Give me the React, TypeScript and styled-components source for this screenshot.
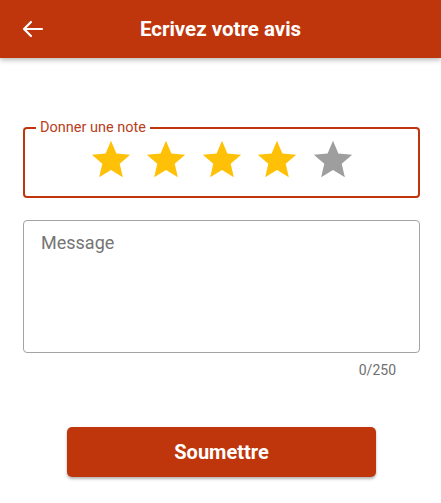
import React from "react";
import styled, { createGlobalStyle } from "styled-components";

const Global = createGlobalStyle`
  html, body { margin: 0; padding: 0; background: #ffffff; }
  body { font-family: Roboto, "Noto Sans", Arial, sans-serif; }
  * { box-sizing: border-box; }
`;

const PRIMARY = "#bf360c";

const Page = styled.div`
  width: 441px;
  min-height: 503px;
  background: #ffffff;
  display: flex;
  flex-direction: column;
`;

const Header = styled.header`
  height: 58px;
  background: ${PRIMARY};
  display: grid;
  grid-template-columns: 60px 1fr 60px;
  align-items: center;
  box-shadow: 0 2px 5px rgba(0, 0, 0, 0.28);
  position: relative;
  z-index: 1;
`;

const BackButton = styled.button`
  border: 0;
  background: transparent;
  padding: 0 0 0 22px;
  height: 58px;
  display: flex;
  align-items: center;
  cursor: pointer;
`;

const Title = styled.h1`
  margin: 0;
  text-align: center;
  color: #ffffff;
  font-size: 20.5px;
  font-weight: 700;
  line-height: 24px;
`;

const Main = styled.main`
  padding: 62px 21px 0 23px;
  display: flex;
  flex-direction: column;
`;

const RatingBox = styled.fieldset`
  margin: 0;
  padding: 1px 0 13px;
  border: 2px solid ${PRIMARY};
  border-radius: 4px;
  min-width: 0;
`;

const Legend = styled.legend`
  margin-left: 11px;
  padding: 0 4px;
  font-size: 14.5px;
  line-height: 16px;
  color: #b8401a;
`;

const Stars = styled.div`
  display: flex;
  justify-content: center;
  gap: 9.5px;
`;

const StarButton = styled.button`
  border: 0;
  padding: 0;
  background: transparent;
  width: 46px;
  height: 46px;
  display: flex;
  cursor: pointer;
`;

const MessageArea = styled.textarea`
  margin-top: 22px;
  width: 100%;
  height: 133px;
  border: 1px solid #a3a3a3;
  border-radius: 4px;
  padding: 11px 17px;
  font-family: Roboto, "Noto Sans", Arial, sans-serif;
  font-size: 18px;
  line-height: 21px;
  color: #212121;
  resize: none;
  outline: none;
  &::placeholder { color: #757575; }
`;

const Counter = styled.div`
  margin-top: 9px;
  padding-right: 24px;
  text-align: right;
  font-size: 14px;
  line-height: 16px;
  color: #6f6f6f;
`;

const Submit = styled.button`
  margin: 49px auto 0;
  width: 309px;
  height: 50px;
  border: 0;
  border-radius: 5px;
  background: ${PRIMARY};
  color: #ffffff;
  font-family: Roboto, "Noto Sans", Arial, sans-serif;
  font-size: 20px;
  font-weight: 700;
  box-shadow: 0 2px 3px rgba(0, 0, 0, 0.3);
  cursor: pointer;
`;

const BackIcon = () => (
  <svg width="22" height="18" viewBox="0 0 22 18" fill="none">
    <path
      d="M2 9H20M9 2L2 9L9 16"
      stroke="#ffffff"
      strokeWidth="2.2"
      strokeLinecap="round"
      strokeLinejoin="round"
    />
  </svg>
);

const Star = ({ filled }: { filled: boolean }) => (
  <svg width="46" height="46" viewBox="0 0 24 24">
    <path
      d="M12 17.27L18.18 21l-1.64-7.03L22 9.24l-7.19-.61L12 2 9.19 8.63 2 9.24l5.46 4.73L5.82 21z"
      fill={filled ? "#ffc107" : "#9e9e9e"}
    />
  </svg>
);

export default function App() {
  const rating = 4;
  return (
    <Page>
      <Global />
      <Header>
        <BackButton aria-label="Retour">
          <BackIcon />
        </BackButton>
        <Title>Ecrivez votre avis</Title>
        <span />
      </Header>
      <Main>
        <RatingBox>
          <Legend>Donner une note</Legend>
          <Stars>
            {[1, 2, 3, 4, 5].map((n) => (
              <StarButton key={n} aria-label={`${n} étoiles`}>
                <Star filled={n <= rating} />
              </StarButton>
            ))}
          </Stars>
        </RatingBox>
        <MessageArea placeholder="Message" maxLength={250} />
        <Counter>0/250</Counter>
        <Submit>Soumettre</Submit>
      </Main>
    </Page>
  );
}
